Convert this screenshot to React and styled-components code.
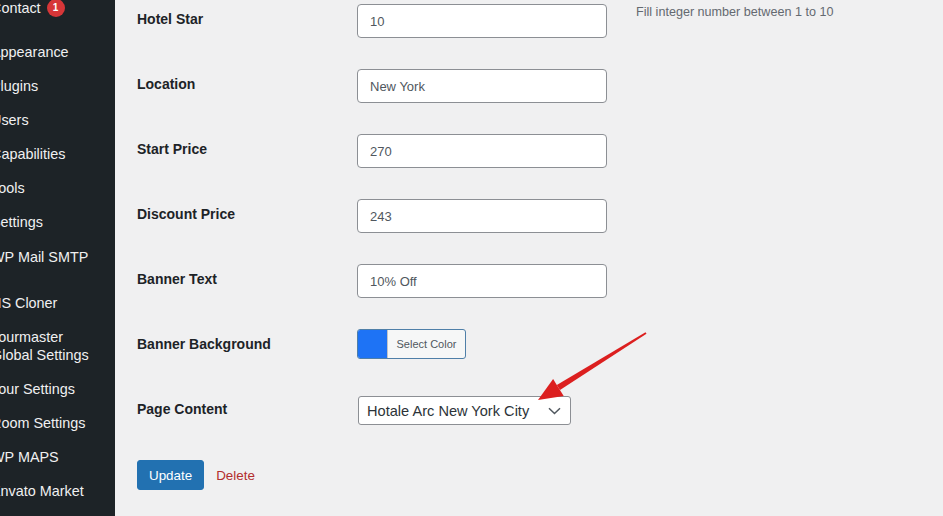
import React from "react";
import styled, { createGlobalStyle } from "styled-components";

const Global = createGlobalStyle`
  html, body { margin: 0; padding: 0; background: #f0f0f1; }
  body { font-family: "Liberation Sans", Arial, sans-serif; }
  * { box-sizing: border-box; }
`;

const Page = styled.div`
  position: relative;
  display: flex;
  width: 943px;
  height: 516px;
  overflow: hidden;
  background: #f0f0f1;
`;

const Sidebar = styled.nav`
  flex: 0 0 115px;
  height: 100%;
  background: #1d2327;
  overflow: hidden;
`;

const Menu = styled.ul`
  list-style: none;
  margin: -9px 0 0 -9px;
  padding: 0;
  width: 124px;
`;

const Item = styled.li`
  padding: ${(p) => (p.$tall ? "9px 0" : "8px 0")};
  font-size: 14.4px;
  line-height: 18px;
  color: #f0f0f1;
  white-space: nowrap;
  display: flex;
  align-items: center;
`;

const Separator = styled.li`
  height: ${(p) => p.$h}px;
`;

const Badge = styled.span`
  display: inline-flex;
  align-items: center;
  justify-content: center;
  width: 18px;
  height: 18px;
  margin-left: 6px;
  border-radius: 9px;
  background: #d63638;
  color: #fff;
  font-size: 10px;
  font-weight: 700;
`;

const Main = styled.main`
  flex: 1;
  padding: 4px 0 0 22px;
`;

const Row = styled.div`
  display: grid;
  grid-template-columns: 220px 250px auto;
  align-items: start;
  height: 65px;
`;

const Label = styled.div`
  padding-top: 6px;
  font-size: 14px;
  line-height: 18px;
  font-weight: 700;
  color: #1d2327;
`;

const Input = styled.input`
  width: 250px;
  height: 34px;
  padding: 0 12px;
  border: 1px solid #8c8f94;
  border-radius: 4px;
  background: #fff;
  font-family: inherit;
  font-size: 13px;
  color: #50575e;
  outline: none;
`;

const Description = styled.div`
  margin-left: 29px;
  font-size: 12.6px;
  line-height: 16px;
  color: #646970;
  white-space: nowrap;
`;

const ColorButton = styled.button`
  display: flex;
  align-items: stretch;
  width: 109px;
  height: 30px;
  padding: 0;
  border: 1px solid #4f7fa8;
  border-radius: 3px;
  background: #f6f7f7;
  overflow: hidden;
  font-family: inherit;
  cursor: pointer;
`;

const Swatch = styled.span`
  flex: 0 0 30px;
  background: ${(p) => p.$color};
  border-right: 1px solid #c3c4c7;
`;

const ColorText = styled.span`
  flex: 1;
  display: flex;
  align-items: center;
  justify-content: center;
  font-size: 11px;
  color: #50575e;
`;

const SelectBox = styled.div`
  margin-top: 2px;
  margin-left: 1px;
  width: 213px;
  height: 29px;
  display: flex;
  align-items: center;
  justify-content: space-between;
  padding: 0 9px 0 8px;
  border: 1px solid #8c8f94;
  border-radius: 3px;
  background: #fff;
  font-size: 14.6px;
  color: #2c3338;
  white-space: nowrap;
`;

const Actions = styled.div`
  display: flex;
  align-items: center;
  gap: 12px;
  margin-top: 1px;
`;

const Primary = styled.button`
  height: 30px;
  padding: 0 11px;
  border: 1px solid #2271b1;
  border-radius: 3px;
  background: #2271b1;
  color: #fff;
  font-family: inherit;
  font-size: 13.4px;
`;

const DangerLink = styled.a`
  font-size: 13.4px;
  color: #b32d2e;
  text-decoration: none;
`;

const Annotation = styled.svg`
  position: absolute;
  left: 530px;
  top: 325px;
  width: 125px;
  height: 85px;
  pointer-events: none;
`;

const menu = [
  { label: "Contact", badge: "1" },
  { sep: 10 },
  "Appearance",
  "Plugins",
  "Users",
  "Capabilities",
  "Tools",
  "Settings",
  { label: "WP Mail SMTP", tall: true },
  { sep: 11 },
  "NS Cloner",
  { label: "Tourmaster", line2: "Global Settings" },
  "Tour Settings",
  "Room Settings",
  "WP MAPS",
  "Envato Market",
];

const fields = [
  { label: "Hotel Star", value: "10", desc: "Fill integer number between 1 to 10" },
  { label: "Location", value: "New York" },
  { label: "Start Price", value: "270" },
  { label: "Discount Price", value: "243" },
  { label: "Banner Text", value: "10% Off" },
];

export default function App() {
  return (
    <Page>
      <Global />
      <Sidebar>
        <Menu>
          {menu.map((m, i) => {
            if (m.sep) return <Separator key={i} $h={m.sep} />;
            if (typeof m === "string") return <Item key={i}>{m}</Item>;
            return (
              <Item key={i} $tall={m.tall}>
                {m.line2 ? (
                  <span>
                    {m.label}
                    <br />
                    {m.line2}
                  </span>
                ) : (
                  m.label
                )}
                {m.badge && <Badge>{m.badge}</Badge>}
              </Item>
            );
          })}
        </Menu>
      </Sidebar>
      <Main>
        {fields.map((f) => (
          <Row key={f.label}>
            <Label>{f.label}</Label>
            <Input defaultValue={f.value} />
            {f.desc && <Description>{f.desc}</Description>}
          </Row>
        ))}
        <Row>
          <Label>Banner Background</Label>
          <ColorButton>
            <Swatch $color="#1e73f5" />
            <ColorText>Select Color</ColorText>
          </ColorButton>
        </Row>
        <Row>
          <Label>Page Content</Label>
          <SelectBox>
            <span>Hotale Arc New York City</span>
            <svg width="13" height="8" viewBox="0 0 13 8">
              <path d="M1 1.2 L6.5 6.5 L12 1.2" fill="none" stroke="#50575e" strokeWidth="1.5" />
            </svg>
          </SelectBox>
        </Row>
        <Actions>
          <Primary>Update</Primary>
          <DangerLink href="#">Delete</DangerLink>
        </Actions>
      </Main>
      <Annotation viewBox="0 0 125 85">
        <polygon points="116.5,8.85 115.5,7.15 26.8,59.9 30,65" fill="#dc1f1f" />
        <polygon points="8,75 23.1,53.9 33.7,70.9" fill="#dc1f1f" />
      </Annotation>
    </Page>
  );
}
